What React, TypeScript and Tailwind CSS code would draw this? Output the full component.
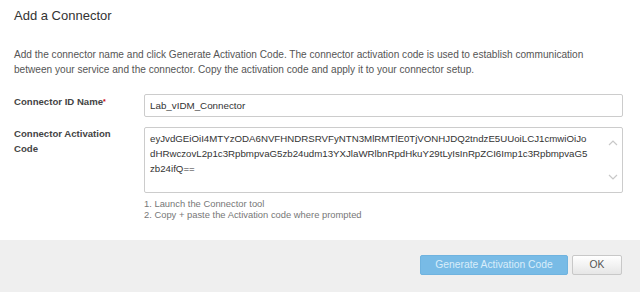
import React from "react";

const codeLines = [
  "eyJvdGEiOiI4MTYzODA6NVFHNDRSRVFyNTN3MlRMTlE0TjVONHJDQ2tndzE5UUoiLCJ1cmwiOiJo",
  "dHRwczovL2p1c3RpbmpvaG5zb24udm13YXJlaWRlbnRpdHkuY29tLyIsInRpZCI6Imp1c3RpbmpvaG5",
  "zb24ifQ==",
];

export default function App() {
  return (
    <div className="w-[640px] h-[292px] bg-white flex flex-col font-['Liberation_Sans',Arial,sans-serif] text-[#333]">
      <div className="flex-1 px-[14px]">
        <h1 className="text-[13px] leading-[16px] mt-[8px] text-[#333]">Add a Connector</h1>
        <p className="mt-[23px] text-[10.1px] leading-[15px] text-[#555] pr-[20px]">
          Add the connector name and click Generate Activation Code. The connector activation code is used to establish communication
          between your service and the connector. Copy the activation code and apply it to your connector setup.
        </p>

        <div className="mt-[17px] flex">
          <label className="w-[130px] pt-[1px] text-[9.6px] leading-[14px] font-bold text-[#444]">
            Connector ID Name<span className="text-[#c00] align-top text-[7px]">*</span>
          </label>
          <input
            readOnly
            value="Lab_vIDM_Connector"
            className="w-[479px] h-[23px] border border-[#ccc] rounded-[2px] px-[5px] text-[9.8px] text-[#333] outline-none"
          />
        </div>

        <div className="mt-[10px] flex">
          <label className="w-[130px] -mt-[1px] text-[9.6px] leading-[15px] font-bold text-[#444]">
            Connector Activation
            <br />
            Code
          </label>
          <div className="flex flex-col">
            <div className="relative w-[479px] h-[66px] border border-[#ccc] rounded-[2px] pl-[5px] pr-[24px] pt-[3px]">
              {codeLines.map((l) => (
                <div key={l} className="text-[9.7px] leading-[15px] text-[#333] whitespace-nowrap">
                  {l}
                </div>
              ))}
              <svg className="absolute right-[4px] top-[11px]" width="10" height="8" viewBox="0 0 10 8">
                <path d="M1 6 L5 2 L9 6" fill="none" stroke="#c8c8c8" strokeWidth="1.2" />
              </svg>
              <svg className="absolute right-[4px] bottom-[11px]" width="10" height="8" viewBox="0 0 10 8">
                <path d="M1 2 L5 6 L9 2" fill="none" stroke="#c8c8c8" strokeWidth="1.2" />
              </svg>
            </div>
            <ol className="mt-[6px] text-[9.4px] leading-[10.5px] text-[#777]">
              <li>1. Launch the Connector tool</li>
              <li>2. Copy + paste the Activation code where prompted</li>
            </ol>
          </div>
        </div>
      </div>

      <div className="h-[52px] bg-[#efefef] flex items-start justify-end pt-[15px] pr-[18px] gap-[4px]">
        <button className="w-[148px] h-[20px] bg-[#78bbe6] border border-[#6fb3df] rounded-[2px] text-[10.3px] text-[#d9edfa]">
          Generate Activation Code
        </button>
        <button className="w-[50px] h-[20px] bg-gradient-to-b from-white to-[#e6e6e6] border border-[#c8c8c8] rounded-[2px] text-[10.3px] text-[#555]">
          OK
        </button>
      </div>
    </div>
  );
}
